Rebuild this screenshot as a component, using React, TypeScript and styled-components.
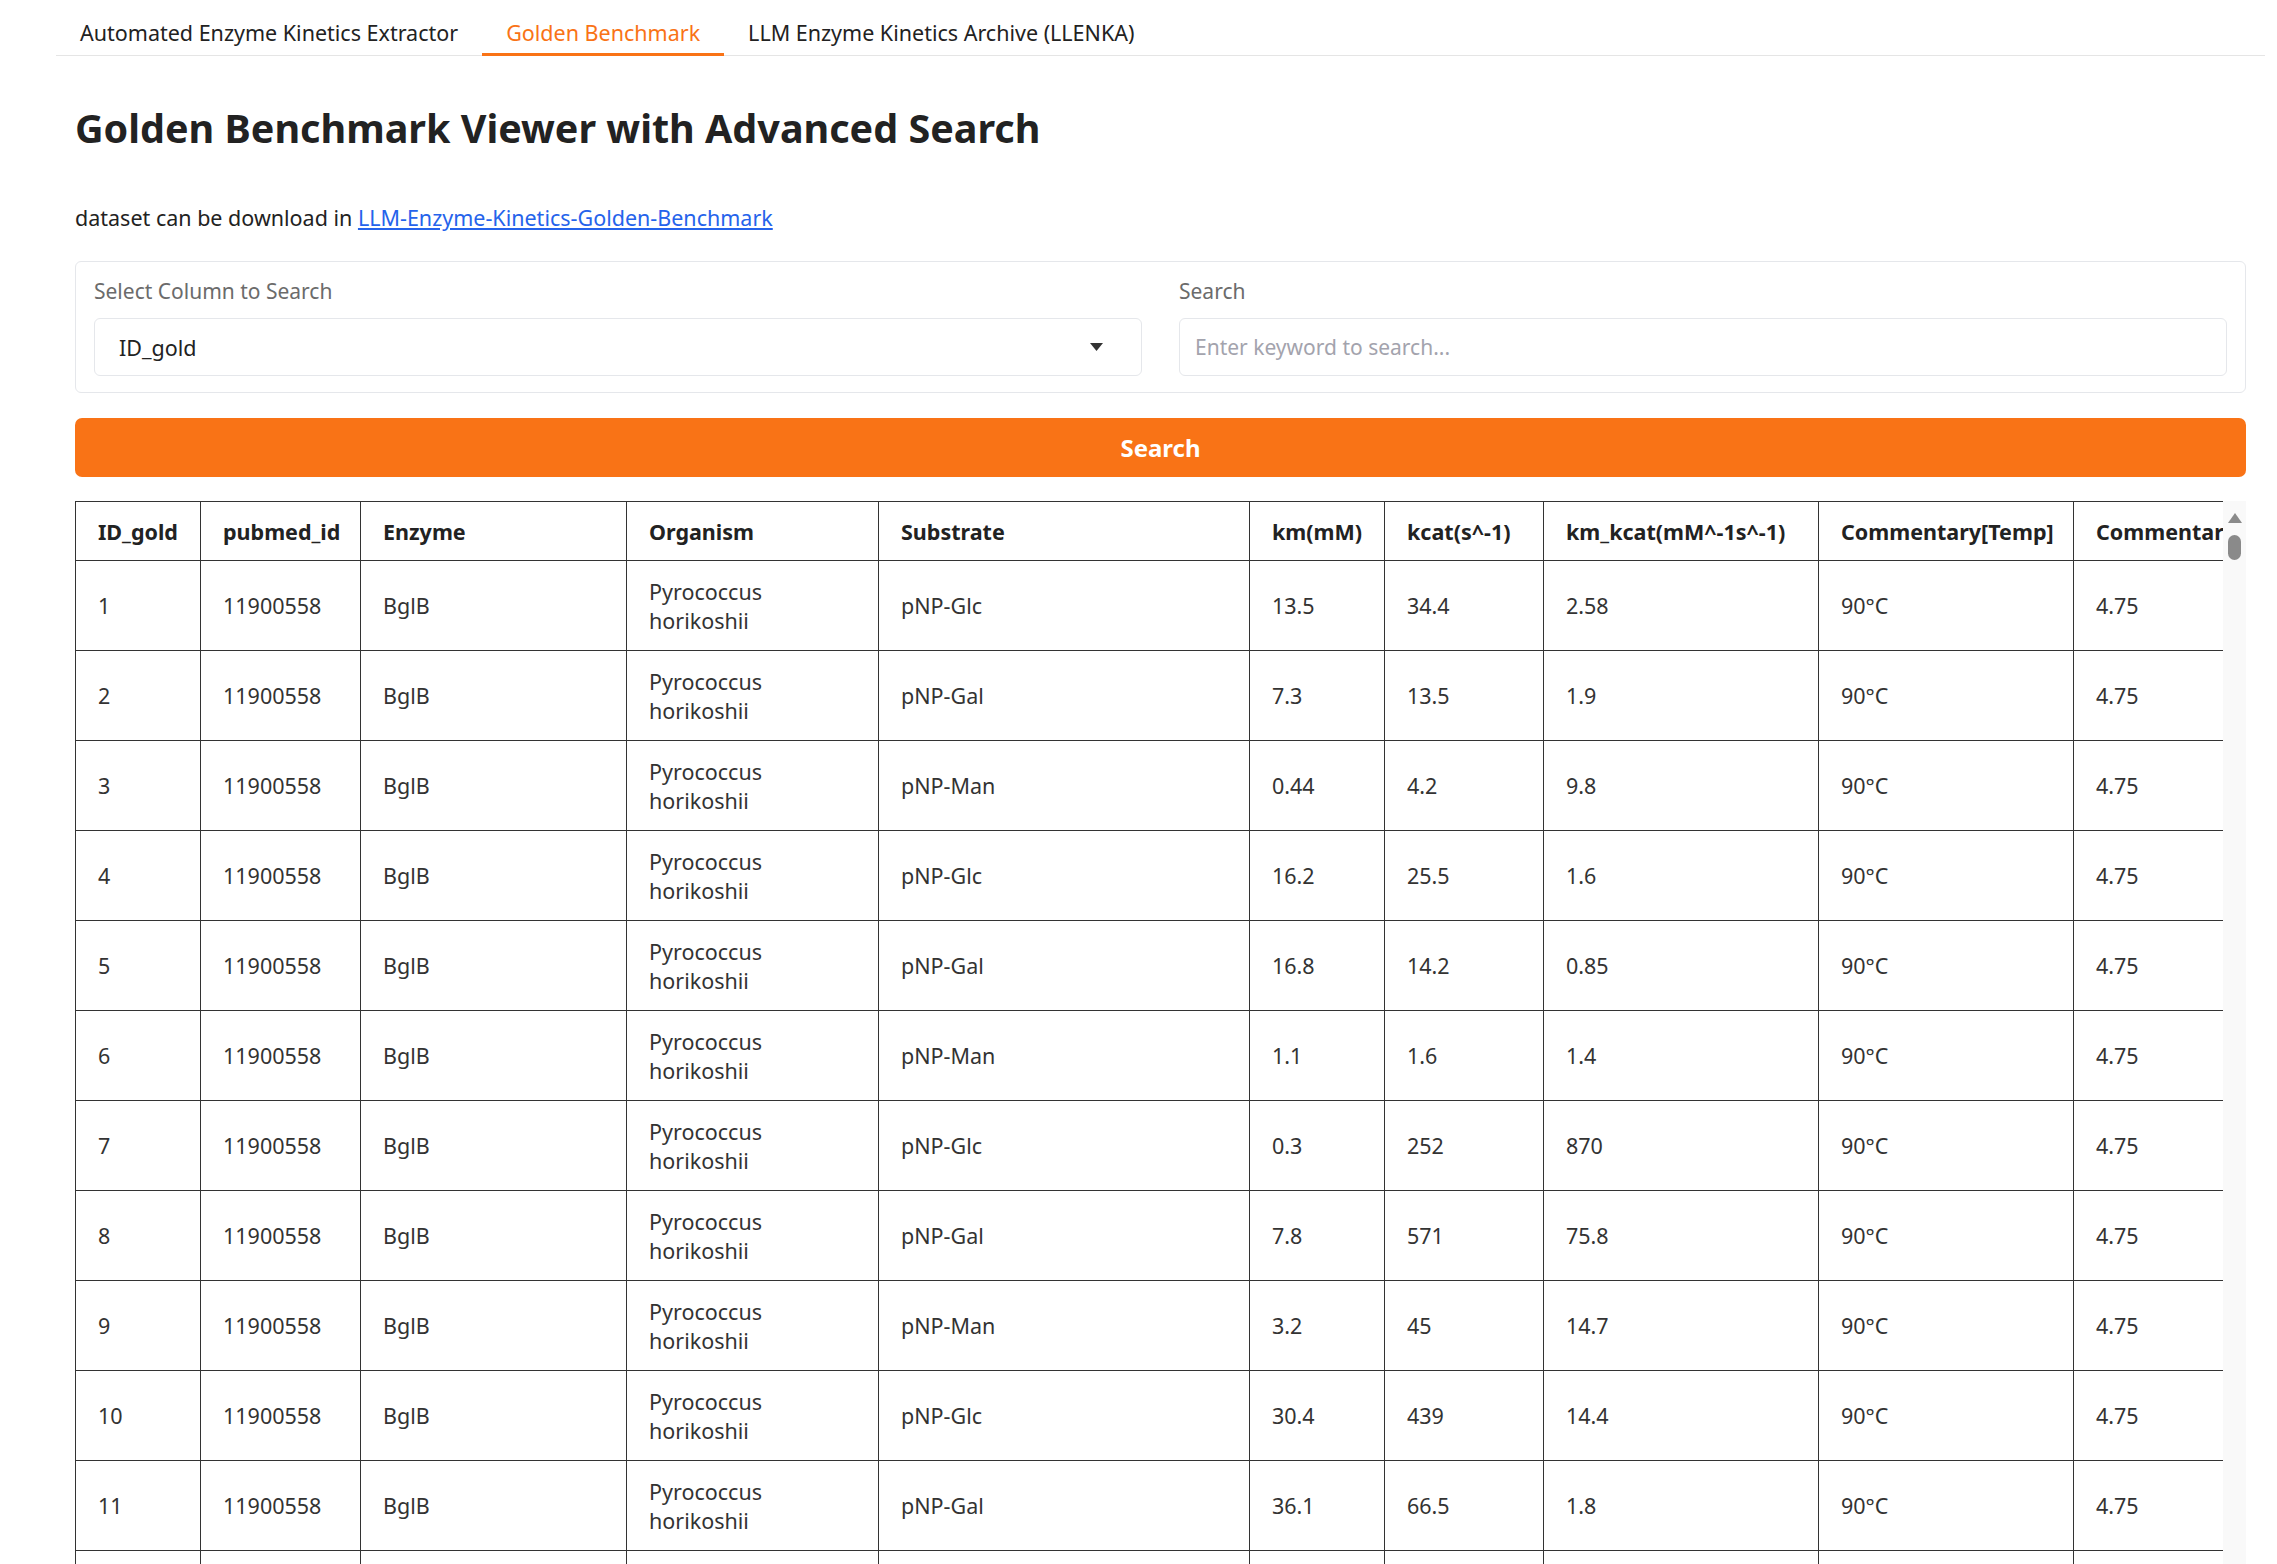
import React from "react";
import styled, { createGlobalStyle } from "styled-components";

const GlobalStyle = createGlobalStyle`
  html, body {
    margin: 0;
    padding: 0;
    background: #ffffff;
    overflow: hidden;
  }
  body {
    font-family: "Noto Sans", "Open Sans", sans-serif;
    color: #222;
  }
  * { box-sizing: border-box; }
`;

const Page = styled.div`
  padding: 0 12px 0 56px;
`;

const TabBar = styled.nav`
  display: flex;
  border-bottom: 1px solid #e5e5e5;
`;

const Tab = styled.div<{ $active?: boolean }>`
  padding: 18px 24px 6px;
  line-height: 29px;
  font-size: 21.5px;
  color: ${(p) => (p.$active ? "#f97316" : "#222")};
  border-bottom: 3px solid ${(p) => (p.$active ? "#f97316" : "transparent")};
  margin-bottom: -1px;
  white-space: nowrap;
`;

const Panel = styled.main`
  padding: 0 19px;
  display: flex;
  flex-direction: column;
`;

const Title = styled.h1`
  margin: 47px 0 0;
  font-size: 39.5px;
  line-height: 50px;
  font-weight: 700;
  color: #222;
`;

const Note = styled.p`
  margin: 50px 0 0;
  font-size: 21.5px;
  line-height: 29px;
  color: #222;
`;

const Link = styled.a`
  color: #2563eb;
  text-decoration: underline;
`;

const SearchBox = styled.section`
  margin-top: 29px;
  border: 1px solid #e5e7eb;
  border-radius: 6px;
  padding: 15px 18px 16px;
  display: grid;
  grid-template-columns: 1fr 1fr;
  column-gap: 37px;
`;

const Field = styled.div`
  display: flex;
  flex-direction: column;
  gap: 12px;
`;

const Label = styled.span`
  font-size: 21px;
  line-height: 29px;
  color: #6b6b6b;
`;

const SelectBox = styled.div`
  height: 58px;
  border: 1px solid #e5e7eb;
  border-radius: 6px;
  display: flex;
  align-items: center;
  justify-content: space-between;
  padding: 0 38px 0 24px;
  font-size: 21.5px;
  color: #222;
`;

const Caret = styled.svg`
  width: 13px;
  height: 8px;
`;

const Input = styled.input`
  height: 58px;
  border: 1px solid #e5e7eb;
  border-radius: 6px;
  padding: 0 15px;
  font-family: inherit;
  font-size: 21px;
  color: #222;
  outline: none;
  &::placeholder {
    color: #a3a3ad;
  }
`;

const SearchButton = styled.button`
  margin-top: 25px;
  height: 59px;
  border: none;
  border-radius: 7px;
  background: #f97316;
  color: #ffffff;
  font-family: inherit;
  font-weight: 700;
  font-size: 24px;
`;

const TableFrame = styled.div`
  margin-top: 24px;
  display: flex;
  height: 1100px;
`;

const TableViewport = styled.div`
  flex: 1;
  overflow: hidden;
`;

const ScrollTrack = styled.div`
  width: 23px;
  background: #f9f9f9;
  display: flex;
  flex-direction: column;
  align-items: center;
  padding-top: 12px;
  gap: 12px;
`;

const ScrollArrow = styled.div`
  width: 0;
  height: 0;
  border-left: 7px solid transparent;
  border-right: 7px solid transparent;
  border-bottom: 10px solid #8a8a8a;
`;

const ScrollThumb = styled.div`
  width: 13px;
  height: 25px;
  border-radius: 7px;
  background: #8a8a8a;
`;

const Table = styled.table`
  border-collapse: collapse;
  table-layout: fixed;
  width: 2300px;
  font-size: 21.5px;
  line-height: 29px;
`;

const HeadCell = styled.th`
  height: 59px;
  border: 1px solid #333;
  padding: 0 22px;
  text-align: left;
  font-weight: 700;
  color: #222;
  white-space: nowrap;
  overflow: hidden;
`;

const Cell = styled.td`
  height: 90px;
  border: 1px solid #333;
  padding: 0 22px;
  text-align: left;
  vertical-align: middle;
  color: #333;
`;

const columns = [
  { key: "ID_gold", width: 125 },
  { key: "pubmed_id", width: 160 },
  { key: "Enzyme", width: 266 },
  { key: "Organism", width: 252 },
  { key: "Substrate", width: 371 },
  { key: "km(mM)", width: 135 },
  { key: "kcat(s^-1)", width: 159 },
  { key: "km_kcat(mM^-1s^-1)", width: 275 },
  { key: "Commentary[Temp]", width: 255 },
  { key: "Commentary[pH]", width: 302 },
];

const rows: string[][] = [
  ["1", "pNP-Glc", "13.5", "34.4", "2.58"],
  ["2", "pNP-Gal", "7.3", "13.5", "1.9"],
  ["3", "pNP-Man", "0.44", "4.2", "9.8"],
  ["4", "pNP-Glc", "16.2", "25.5", "1.6"],
  ["5", "pNP-Gal", "16.8", "14.2", "0.85"],
  ["6", "pNP-Man", "1.1", "1.6", "1.4"],
  ["7", "pNP-Glc", "0.3", "252", "870"],
  ["8", "pNP-Gal", "7.8", "571", "75.8"],
  ["9", "pNP-Man", "3.2", "45", "14.7"],
  ["10", "pNP-Glc", "30.4", "439", "14.4"],
  ["11", "pNP-Gal", "36.1", "66.5", "1.8"],
  ["12", "pNP-Man", "4.5", "17.6", "3.9"],
];

export default function App() {
  return (
    <>
      <GlobalStyle />
      <Page>
        <TabBar>
          <Tab>Automated Enzyme Kinetics Extractor</Tab>
          <Tab $active>Golden Benchmark</Tab>
          <Tab>LLM Enzyme Kinetics Archive (LLENKA)</Tab>
        </TabBar>
        <Panel>
          <Title>Golden Benchmark Viewer with Advanced Search</Title>
          <Note>
            dataset can be download in{" "}
            <Link href="#">LLM-Enzyme-Kinetics-Golden-Benchmark</Link>
          </Note>
          <SearchBox>
            <Field>
              <Label>Select Column to Search</Label>
              <SelectBox>
                <span>ID_gold</span>
                <Caret viewBox="0 0 13 8">
                  <path d="M0 0 H13 L6.5 8 Z" fill="#333" />
                </Caret>
              </SelectBox>
            </Field>
            <Field>
              <Label>Search</Label>
              <Input placeholder="Enter keyword to search..." />
            </Field>
          </SearchBox>
          <SearchButton>Search</SearchButton>
          <TableFrame>
            <TableViewport>
              <Table>
                <colgroup>
                  {columns.map((c) => (
                    <col key={c.key} style={{ width: c.width }} />
                  ))}
                </colgroup>
                <thead>
                  <tr>
                    {columns.map((c) => (
                      <HeadCell key={c.key}>{c.key}</HeadCell>
                    ))}
                  </tr>
                </thead>
                <tbody>
                  {rows.map((r) => (
                    <tr key={r[0]}>
                      <Cell>{r[0]}</Cell>
                      <Cell>11900558</Cell>
                      <Cell>BglB</Cell>
                      <Cell>
                        Pyrococcus
                        <br />
                        horikoshii
                      </Cell>
                      <Cell>{r[1]}</Cell>
                      <Cell>{r[2]}</Cell>
                      <Cell>{r[3]}</Cell>
                      <Cell>{r[4]}</Cell>
                      <Cell>90°C</Cell>
                      <Cell>4.75</Cell>
                    </tr>
                  ))}
                </tbody>
              </Table>
            </TableViewport>
            <ScrollTrack>
              <ScrollArrow />
              <ScrollThumb />
            </ScrollTrack>
          </TableFrame>
        </Panel>
      </Page>
    </>
  );
}
